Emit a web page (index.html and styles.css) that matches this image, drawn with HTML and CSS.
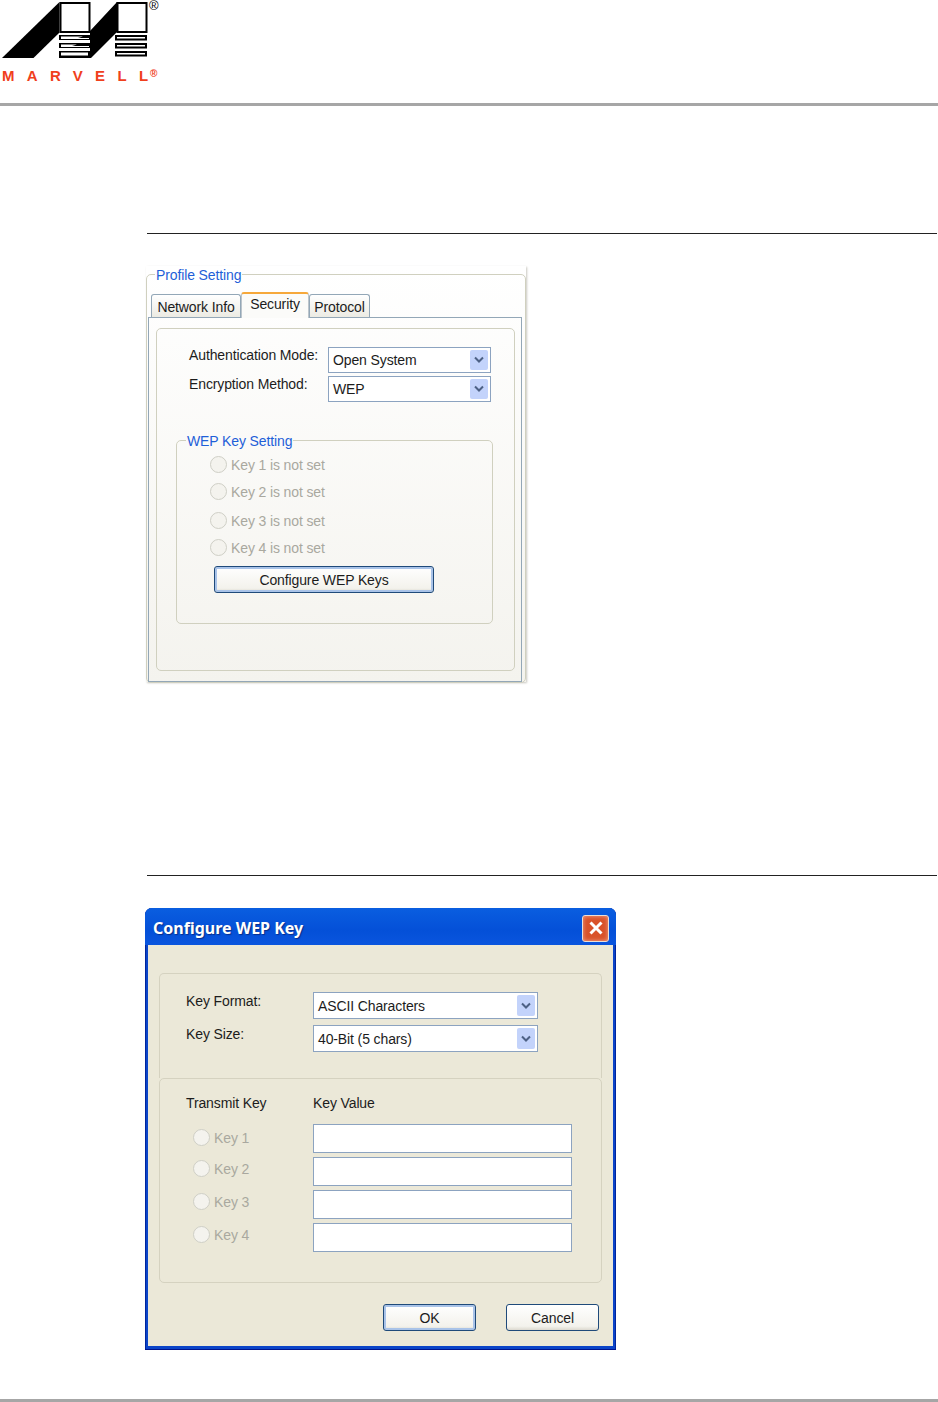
FILE: index.html
```html
<!DOCTYPE html>
<html lang="en">

<head>
    <meta charset="UTF-8">
    <meta name="viewport" content="width=device-width, initial-scale=1.0">
    <title>Configure WEP Key</title>
    <link rel="stylesheet" href="styles.css">
</head>

<body>

    <header class="masthead">
        <svg class="logo-mark" width="160" height="60" viewBox="0 0 160 60">
            <!-- left stroke and square -->
            <polygon points="2,58 59.500,2 59.500,32.500 33.500,58" fill="#000"/>
            <rect x="60.500" y="3" width="29" height="29" fill="#fff" stroke="#000" stroke-width="2"/>
            <!-- middle stroke and stripes -->
            <polygon points="59,51 59,58 91,58 117,32 117,2 90,31 90,51" fill="#000"/>
            <rect x="59" y="35" width="31" height="5" fill="#000"/>
            <rect x="59" y="43" width="31" height="5" fill="#000"/>
            <polygon points="61,36.500 83,36.500 78,38 89,38 89,39 61,39" fill="#fff"/>
            <polygon points="61,44.500 77,44.500 72,46 89,46 89,47 61,47" fill="#fff"/>
            <rect x="61" y="52.500" width="27" height="3" fill="#fff"/>
            <!-- right square and stripes -->
            <rect x="117.500" y="3" width="29" height="29" fill="#fff" stroke="#000" stroke-width="2"/>
            <rect x="116" y="36" width="30" height="3.500" fill="#fff" stroke="#000" stroke-width="2"/>
            <rect x="116" y="44" width="30" height="3.500" fill="#fff" stroke="#000" stroke-width="2"/>
            <rect x="116" y="52" width="30" height="3.500" fill="#fff" stroke="#000" stroke-width="2"/>
        </svg>
        <span class="logo-reg">&reg;</span>
        <div class="logo-word">MARVEL<span class="logo-last">L</span><sup>&reg;</sup></div>
    </header>

    <main class="content">

        <section class="figure figure-profile">
            <div class="panel">
                <fieldset class="group profile-group">
                    <legend>Profile Setting</legend>
                    <div class="tabs">
                        <span class="tab tab-network">Network Info</span>
                        <span class="tab tab-active">Security</span>
                        <span class="tab tab-protocol">Protocol</span>
                    </div>
                    <div class="tab-page">
                        <div class="inner-box">
                            <div class="field-grid">
                                <label class="field-label">Authentication Mode:</label>
                                <div class="combo"><span>Open System</span><span class="combo-btn"><svg width="10" height="8" viewBox="0 0 10 8"><path d="M1 1.500L5 5.500L9 1.500" fill="none" stroke="#4d6185" stroke-width="2"/></svg></span></div>
                                <label class="field-label">Encryption Method:</label>
                                <div class="combo"><span>WEP</span><span class="combo-btn"><svg width="10" height="8" viewBox="0 0 10 8"><path d="M1 1.500L5 5.500L9 1.500" fill="none" stroke="#4d6185" stroke-width="2"/></svg></span></div>
                            </div>
                            <fieldset class="group wep-group">
                                <legend>WEP Key Setting</legend>
                                <div class="wep-keys">
                                    <label class="radio-row"><input type="radio" disabled>Key 1 is not set</label>
                                    <label class="radio-row"><input type="radio" disabled>Key 2 is not set</label>
                                    <label class="radio-row"><input type="radio" disabled>Key 3 is not set</label>
                                    <label class="radio-row"><input type="radio" disabled>Key 4 is not set</label>
                                </div>
                                <button class="xp-btn wep-btn">Configure WEP Keys</button>
                            </fieldset>
                        </div>
                    </div>
                </fieldset>
            </div>
        </section>

        <section class="figure figure-dialog">
            <div class="dialog">
                <div class="title-bar">
                    <span class="title-text">Configure WEP Key</span>
                    <span class="close-btn"><svg width="16" height="16" viewBox="0 0 16 16"><path d="M2.500 2.500L13.500 13.500M13.500 2.500L2.500 13.500" stroke="#fff" stroke-width="3"/></svg></span>
                </div>
                <div class="dialog-body">
                    <div class="xp-box format-box">
                        <label class="format-label">Key Format:</label>
                        <div class="combo combo-wide"><span>ASCII Characters</span><span class="combo-btn"><svg width="10" height="8" viewBox="0 0 10 8"><path d="M1 1.500L5 5.500L9 1.500" fill="none" stroke="#4d6185" stroke-width="2"/></svg></span></div>
                        <label class="format-label">Key Size:</label>
                        <div class="combo combo-wide"><span>40-Bit (5 chars)</span><span class="combo-btn"><svg width="10" height="8" viewBox="0 0 10 8"><path d="M1 1.500L5 5.500L9 1.500" fill="none" stroke="#4d6185" stroke-width="2"/></svg></span></div>
                    </div>
                    <div class="xp-box keys-box">
                        <div class="keys-head"><span>Transmit Key</span><span>Key Value</span></div>
                        <div class="keys-grid">
                            <label class="radio-row"><input type="radio" disabled>Key 1</label>
                            <input class="key-input" type="text">
                            <label class="radio-row"><input type="radio" disabled>Key 2</label>
                            <input class="key-input" type="text">
                            <label class="radio-row"><input type="radio" disabled>Key 3</label>
                            <input class="key-input" type="text">
                            <label class="radio-row"><input type="radio" disabled>Key 4</label>
                            <input class="key-input" type="text">
                        </div>
                    </div>
                    <div class="dialog-buttons">
                        <button class="xp-btn ok-btn">OK</button>
                        <button class="xp-btn plain-btn">Cancel</button>
                    </div>
                </div>
            </div>
        </section>

    </main>

    <footer class="page-foot"></footer>

</body>

</html>
```
FILE: styles.css
```css
/* Resetting basic styles */
* {
    margin: 0;
    padding: 0;
    box-sizing: border-box;
}

body {
    width: 938px;
    height: 1402px;
    background: #fff;
    color: #1c1c1c;
    font-family: 'Liberation Sans', Arial, sans-serif;
    font-size: 14px;
    letter-spacing: -0.12px;
    overflow: hidden;
    display: flex;
    flex-direction: column;
}

/* Page header */
.masthead {
    position: relative;
    height: 106px;
    border-bottom: 3px solid #a6a6a6;
}

.logo-mark {
    display: block;
}

.logo-reg {
    position: absolute;
    left: 149px;
    top: -2px;
    font-size: 13px;
    color: #000;
}

.logo-word {
    position: absolute;
    left: 2px;
    top: 68px;
    font-size: 15px;
    line-height: 15px;
    font-weight: bold;
    letter-spacing: 12.300px;
    color: #f0401c;
}

.logo-last {
    letter-spacing: 0;
}

.logo-word sup {
    margin-left: 2px;
    font-size: 10px;
    line-height: 0;
    letter-spacing: 0;
    vertical-align: 4px;
}

.content {
    flex: 1;
}

.figure {
    margin-left: 147px;
    width: 790px;
    border-top: 1px solid #222;
}

.figure-profile {
    margin-top: 127px;
    padding-top: 34px;
}

.figure-dialog {
    margin-top: 193px;
    padding-top: 32px;
}

/* Profile panel */
.panel {
    width: 380px;
    height: 416px;
    margin-left: -1px;
    background: linear-gradient(180deg, #fff, #f4f3ee);
    box-shadow: 1px 1px 2px #c9c8c0;
}

.group {
    border: 1px solid #d0d0bf;
    border-radius: 5px;
}

.group legend {
    color: #1f5fd8;
    line-height: 14px;
    padding: 2px 1px 0;
}

.profile-group {
    height: 417px;
    padding: 0 3px 0 1px;
    margin-top: -2px;
}

.profile-group legend {
    margin-left: 7px;
}

.tabs {
    display: flex;
    align-items: flex-end;
    height: 35px;
    padding-left: 3px;
}

.tab {
    height: 23px;
    padding-top: 3px;
    line-height: 18px;
    text-align: center;
    background: linear-gradient(180deg, #fff, #ecebe3);
    border: 1px solid #93a7b7;
    border-bottom: 0;
    border-radius: 3px 3px 0 0;
}

.tab-network {
    width: 90px;
}

.tab-protocol {
    width: 61px;
}

.tab-active {
    width: 68px;
    height: 26px;
    padding-top: 1px;
    background: #fbfbf9;
    border-color: #bcc5cc;
    border-top: 2px solid #f6a83a;
    margin-bottom: -1px;
    position: relative;
}

.tab-page {
    height: 365px;
    width: 374px;
    border: 1px solid #93a7b7;
    padding: 10px 6px 10px 7px;
}

.inner-box {
    height: 100%;
    border: 1px solid #d0d0bf;
    border-radius: 5px;
    padding: 18px 21px 0 19px;
}

.field-grid {
    display: grid;
    grid-template-columns: 139px 163px;
    grid-auto-rows: 26px;
    row-gap: 3px;
    padding-left: 13px;
}

.field-label {
    line-height: 16px;
}

/* Dropdowns */
.combo {
    display: flex;
    align-items: center;
    justify-content: space-between;
    background: #fff;
    border: 1px solid #8ca3c0;
    padding: 2px 2px 2px 4px;
    line-height: 16px;
}

.combo-btn {
    width: 18px;
    height: 100%;
    background: #c3d3fb;
    border-radius: 2px;
    display: flex;
    align-items: center;
    justify-content: center;
}

.wep-group {
    height: 192px;
    margin-top: 30px;
    padding: 0 0 0 33px;
}

.wep-group legend {
    margin-left: -24px;
}

.wep-keys {
    display: grid;
    grid-template-rows: 26px 28px 30px 24px;
    margin-top: 3px;
}

.radio-row {
    display: flex;
    align-items: center;
    gap: 4px;
    padding-top: 2px;
    color: #a9a89f;
    line-height: 16px;
}

.radio-row input {
    appearance: none;
    width: 17px;
    height: 17px;
    margin-top: -2px;
    border: 1px solid #cfcfc6;
    border-radius: 50%;
    background: #f4f3ee;
}

/* Buttons */
.xp-btn {
    display: block;
    font-family: inherit;
    font-size: 14px;
    letter-spacing: -0.12px;
    color: #1c1c1c;
    height: 27px;
    background: linear-gradient(180deg, #fff, #f3f2ec 85%, #dcd9cf);
    border: 1px solid #1f4a7a;
    border-radius: 3px;
}

.wep-btn {
    width: 220px;
    margin: 7px 0 0 4px;
    box-shadow: inset 0 0 0 2px #a9c3e8;
}

/* Dialog */
.dialog {
    width: 471px;
    height: 442px;
    margin-left: -2px;
    background: #0b44c8;
    border-radius: 7px 7px 0 0;
    padding: 0 3px 4px 3px;
    box-shadow: inset 0 -1px #00138c, inset 1px 0 #00259c, inset -1px 0 #00259c;
}

.title-bar {
    height: 37px;
    display: flex;
    align-items: center;
    justify-content: space-between;
    padding: 3px 7px 0 8px;
    background: linear-gradient(180deg, #0a5ee0, #0450d8 60%, #0a55de);
    margin: 0 -3px;
    border-radius: 7px 7px 0 0;
}

.title-text {
    color: #fff;
    font-family: 'Noto Sans', sans-serif;
    font-size: 16px;
    font-weight: bold;
    letter-spacing: 0;
    text-shadow: 1px 1px 1px #0a2f8a;
}

.close-btn {
    width: 27px;
    height: 27px;
    border: 1px solid #eadfd8;
    border-radius: 3px;
    background: #d9522a;
    box-shadow: inset 0 0 4px #f0a58c;
    display: flex;
    align-items: center;
    justify-content: center;
}

.dialog-body {
    height: 401px;
    background: #ebe8d8;
    padding: 28px 11px 0 11px;
}

.xp-box {
    border: 1px solid #d5d2c0;
    border-radius: 5px;
}

.format-box {
    height: 105px;
    padding: 19px 0 0 26px;
    display: grid;
    grid-template-columns: 127px 225px;
    grid-auto-rows: 27px;
    row-gap: 6px;
    border-bottom: 0;
    border-bottom-left-radius: 0;
    border-bottom-right-radius: 0;
}

.format-label {
    line-height: 16px;
}

.combo-wide {
    margin-top: -1px;
    margin-bottom: 1px;
    padding-right: 2px;
}

.keys-box {
    height: 205px;
    padding: 16px 0 0 26px;
}

.keys-head {
    display: grid;
    grid-template-columns: 127px 1fr;
    line-height: 16px;
}

.keys-grid {
    display: grid;
    grid-template-columns: 127px 259px;
    grid-auto-rows: 29px;
    row-gap: 4px;
    margin-top: 13px;
}

.keys-grid .radio-row {
    align-self: start;
    height: 22px;
    padding-left: 7px;
}

.keys-grid .radio-row:first-child {
    height: 26px;
}

.key-input {
    background: #fff;
    border: 1px solid #8ca3c0;
}

.dialog-buttons {
    display: flex;
    justify-content: flex-end;
    gap: 30px;
    margin-top: 21px;
    padding-right: 3px;
}

.ok-btn,
.plain-btn {
    width: 93px;
}

.ok-btn {
    box-shadow: inset 0 0 0 2px #a9c3e8;
}

/* Page footer */
.page-foot {
    height: 3px;
    background: #a6a6a6;
}
```
